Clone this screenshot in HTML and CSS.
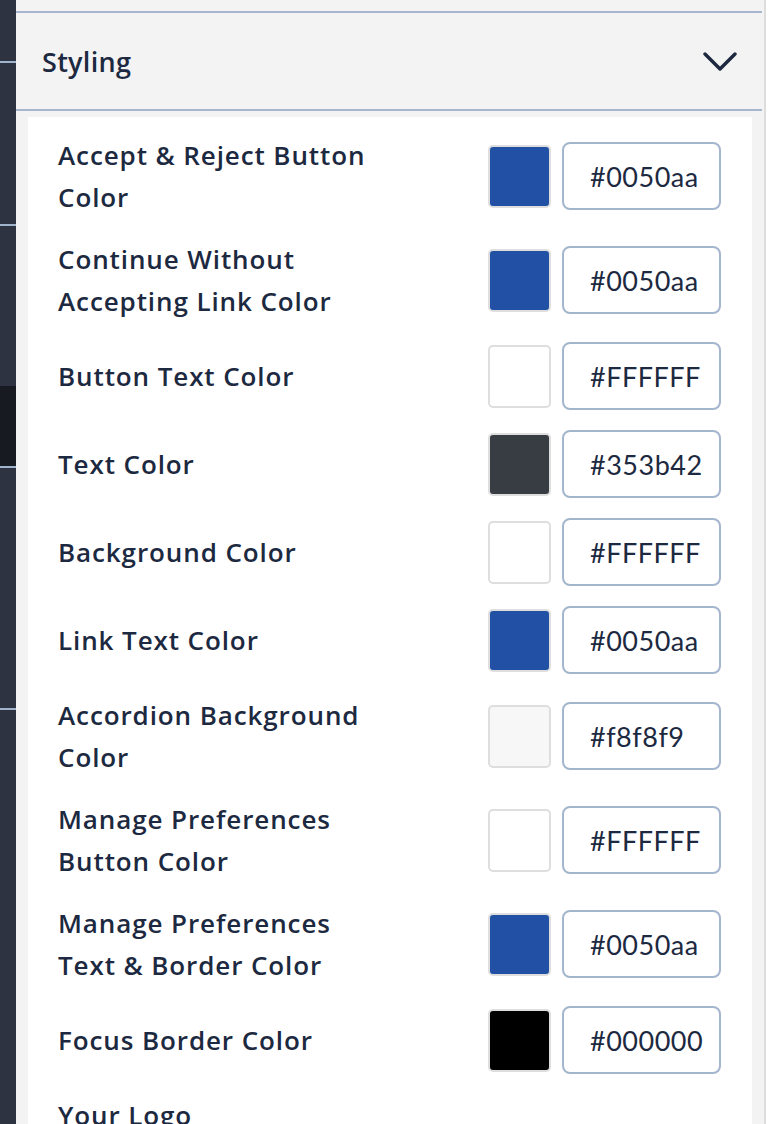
FILE: index.html
```html
<!DOCTYPE html>
<html>
<head>
<meta charset="utf-8">
<link rel="stylesheet" href="styles.css">
</head>
<body>
<div class="page">
  <div class="sidebar">
    <div class="seg s1"></div>
    <div class="seg s2"></div>
    <div class="seg s3"></div>
    <div class="seg s4"></div>
    <div class="seg s5"></div>
    <div class="seg s6"></div>
  </div>
  <div class="main">
    <div class="section-header">
      <span class="section-title">Styling</span>
      <svg class="chevron" width="34" height="20" viewBox="0 0 34 20"><path d="M2 2 L17 17 L32 2" fill="none" stroke="#1c2940" stroke-width="3.4" stroke-linecap="round" stroke-linejoin="round"/></svg>
    </div>
    <div class="panel">
      <div class="row"><div class="label">Accept &amp; Reject Button Color</div><div class="picker"><div class="swatch" style="background:#2150a5"></div><div class="hex">#0050aa</div></div></div>
      <div class="row"><div class="label">Continue Without Accepting Link Color</div><div class="picker"><div class="swatch" style="background:#2150a5"></div><div class="hex">#0050aa</div></div></div>
      <div class="row"><div class="label">Button Text Color</div><div class="picker"><div class="swatch" style="background:#ffffff"></div><div class="hex">#FFFFFF</div></div></div>
      <div class="row"><div class="label">Text Color</div><div class="picker"><div class="swatch" style="background:#383c43"></div><div class="hex">#353b42</div></div></div>
      <div class="row"><div class="label">Background Color</div><div class="picker"><div class="swatch" style="background:#ffffff"></div><div class="hex">#FFFFFF</div></div></div>
      <div class="row"><div class="label">Link Text Color</div><div class="picker"><div class="swatch" style="background:#2150a5"></div><div class="hex">#0050aa</div></div></div>
      <div class="row"><div class="label">Accordion Background Color</div><div class="picker"><div class="swatch" style="background:#f7f7f7"></div><div class="hex">#f8f8f9</div></div></div>
      <div class="row"><div class="label">Manage Preferences Button Color</div><div class="picker"><div class="swatch" style="background:#ffffff"></div><div class="hex">#FFFFFF</div></div></div>
      <div class="row"><div class="label">Manage Preferences Text &amp; Border Color</div><div class="picker"><div class="swatch" style="background:#2150a5"></div><div class="hex">#0050aa</div></div></div>
      <div class="row"><div class="label">Focus Border Color</div><div class="picker"><div class="swatch" style="background:#000000"></div><div class="hex">#000000</div></div></div>
      <div class="row"><div class="label">Your Logo</div></div>
    </div>
  </div>
</div>
</body>
</html>
```
FILE: styles.css
```css
html, body {
  margin: 0;
  padding: 0;
  background: #ffffff;
}
.page {
  display: flex;
  width: 784px;
  height: 1124px;
  overflow: hidden;
}
.sidebar {
  width: 16px;
  flex: none;
  display: flex;
  flex-direction: column;
  background: #2d3340;
}
.seg {
  border-bottom: 2px solid #9fb3cc;
  flex: none;
}
.s1 { height: 61px; }
.s2 { height: 161px; }
.s3 { height: 160px; border-bottom: none; }
.s4 { height: 80px; background: #171a20; }
.s5 { height: 240px; }
.s6 { border-bottom: none; }
.main {
  width: 748px;
  flex: none;
  background: #f3f3f3;
  border-right: 2px solid #dddddd;
  display: flex;
  flex-direction: column;
}
.section-header {
  flex: none;
  margin-top: 11px;
  margin-right: 2px;
  height: 96px;
  border-top: 2px solid #a6b7cd;
  border-bottom: 2px solid #a6b7cd;
  display: flex;
  align-items: center;
  justify-content: space-between;
  padding: 0 25px 0 26px;
}
.section-title {
  font-family: "Open Sans", "Liberation Sans", sans-serif;
  font-weight: 600;
  font-size: 27px;
  letter-spacing: 0.3px;
  color: #1c2940;
}
.chevron {
  display: block;
  margin-top: 2px;
}
.panel {
  flex: none;
  margin: 6px 12px 0 12px;
  background: #ffffff;
  padding: 17px 31px 0 30px;
  height: 1000px;
}
.row {
  display: flex;
  align-items: center;
  justify-content: space-between;
  margin-bottom: 20px;
}
.label {
  width: 322px;
  font-family: "Open Sans", "Liberation Sans", sans-serif;
  font-weight: 600;
  font-size: 26px;
  letter-spacing: 0.9px;
  line-height: 42px;
  color: #1c2940;
}
.picker {
  display: flex;
  align-items: center;
  gap: 11px;
}
.swatch {
  width: 59px;
  height: 59px;
  border: 2px solid #dedede;
  border-radius: 5px;
}
.hex {
  width: 129px;
  height: 64px;
  border: 2px solid #a3b6cd;
  border-radius: 8px;
  padding-left: 26px;
  display: flex;
  align-items: center;
  font-family: "Lato", "Liberation Sans", sans-serif;
  font-size: 27px;
  letter-spacing: 0.5px;
  color: #1c2940;
}
```
